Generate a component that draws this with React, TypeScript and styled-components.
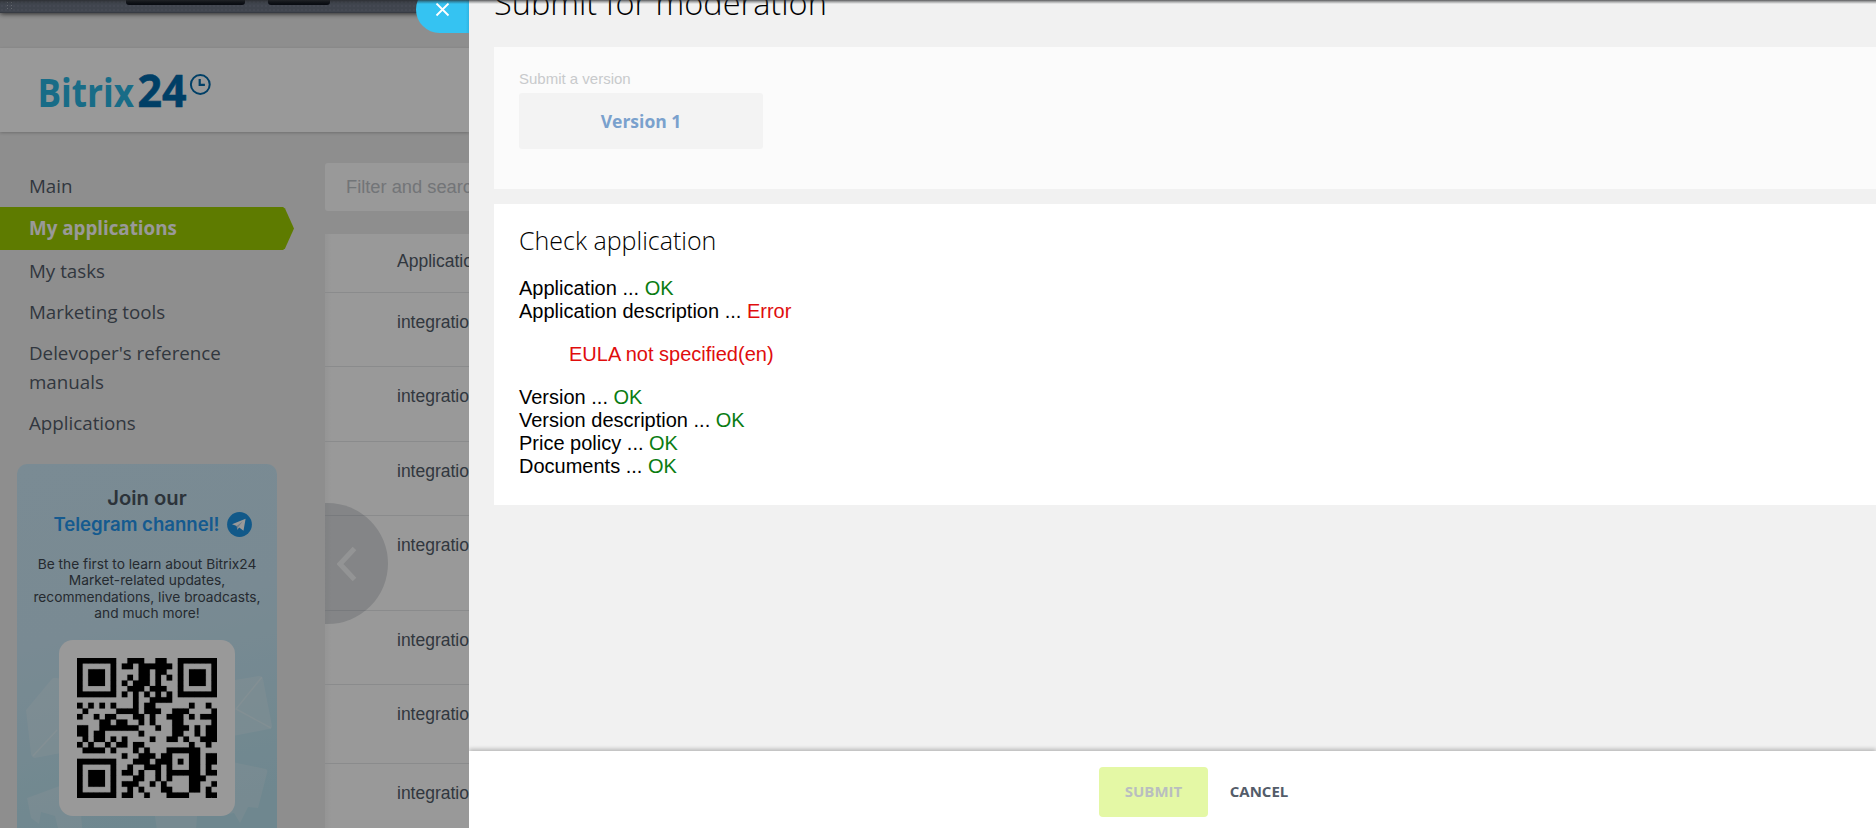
import React from 'react';
import styled, { createGlobalStyle } from 'styled-components';

const arial = "'Liberation Sans', Arial, sans-serif";
const openSans = "'Open Sans', sans-serif";
const inter = "Inter, sans-serif";

const GlobalStyle = createGlobalStyle`
  *, *::before, *::after { box-sizing: border-box; }
  body { margin: 0; overflow: hidden; font-family: ${arial}; }
  h1, h2, p { margin: 0; font-weight: normal; }
`;

const Screen = styled.div`
  position: relative;
  display: flex;
  width: 100%;
  height: 100vh;
  overflow: hidden;
`;

const TopShade = styled.div`
  position: absolute;
  z-index: 5;
  top: 0;
  left: 0;
  right: 0;
  height: 4px;
  background: linear-gradient(rgba(40, 42, 45, 0.75), rgba(40, 42, 45, 0.4) 40%, rgba(40, 42, 45, 0));
`;

/* Page under the slider */

const Underlay = styled.div`
  position: relative;
  display: flex;
  flex-direction: column;
  flex: 0 0 469px;
  overflow: hidden;
  background: #ededed;
  color: #535c69;

  &::after {
    content: '';
    position: absolute;
    inset: 0;
    background: rgba(0, 0, 0, 0.4);
  }
`;

const AdminBar = styled.div`
  display: flex;
  gap: 23px;
  flex: none;
  height: 13px;
  padding-left: 126px;
  background-color: #6b7382;
  background-image: radial-gradient(circle, #737b8a 0.8px, transparent 1px);
  background-size: 4px 4px;
  border-bottom: 1px solid #5c6370;
  box-shadow: 0 1px 5px rgba(0, 0, 0, 0.7);
`;

const AdminTab = styled.div<{ $width: number }>`
  width: ${(p) => p.$width}px;
  height: 4.5px;
  border-radius: 0 0 3px 3px;
  background: #10141f;
`;

const DragDots = styled.svg`
  position: absolute;
  top: 0;
  left: 6px;
`;

const SiteHeader = styled.header`
  flex: none;
  height: 84px;
  margin-top: 35px;
  padding: 22px 0 0 36px;
  background: #fff;
  box-shadow: 0 1px 3px rgba(0, 0, 0, 0.22);
`;

const Columns = styled.div`
  display: flex;
  flex: 1;
  min-height: 0;
`;

const Sidebar = styled.aside`
  flex: 0 0 325px;
  padding-top: 33px;
`;

const Nav = styled.nav`
  display: flex;
  flex-direction: column;
  font: 18.75px/29px ${openSans};
`;

const NavItem = styled.a`
  padding: 6px 60px 6px 29px;
`;

const ActiveItem = styled.a`
  width: 294px;
  margin-top: 1px;
  padding: 6px 0 8px 29px;
  background: #9dcd00;
  color: #fff;
  font-weight: 700;
  clip-path: polygon(0 0, 283px 0, 285px 1.5px, 294px 21.5px, 285px 41.5px, 283px 43px, 0 43px);
`;

const Banner = styled.section`
  position: relative;
  display: flex;
  flex-direction: column;
  align-items: center;
  width: 260px;
  height: 400px;
  margin: 21px 0 0 17px;
  padding-top: 21px;
  border-radius: 10px;
  background: linear-gradient(165deg, #cbe8f7 0%, #cae7f5 40%, #b9e2ef 85%);
  font-family: ${inter};
  text-align: center;
`;

const BannerArt = styled.svg`
  position: absolute;
  inset: 0;
`;

const BannerTitle = styled.h2`
  font-size: 20.2px;
  line-height: 26px;
  font-weight: 600;
  color: #4a5562;
`;

const BannerLink = styled.div`
  display: flex;
  align-items: center;
  gap: 7px;
  padding-left: 11px;
  font-size: 18.6px;
  line-height: 26px;
  font-weight: 600;
  color: #2496ee;
`;

const BannerText = styled.p`
  margin: 19px 0;
  font-size: 13.75px;
  line-height: 16.3px;
  color: #3e4650;
  white-space: nowrap;
`;

const QrCard = styled.div`
  position: relative;
  display: flex;
  flex: none;
  align-items: center;
  justify-content: center;
  width: 176px;
  height: 176px;
  border-radius: 14px;
  background: #fff;
`;

const Content = styled.main`
  position: relative;
  display: flex;
  flex-direction: column;
  flex: none;
  width: 1500px;
  padding-top: 31px;
`;

const Filter = styled.div`
  flex: none;
  height: 48px;
  padding-left: 21px;
  border-radius: 3px;
  background: #fff;
  font-size: 18.3px;
  line-height: 47px;
  color: #bfc3c8;
`;

const Table = styled.div`
  margin-top: 23px;
  background: linear-gradient(90deg, #f8f8f8, #fff 6px);
  font-size: 17.5px;
  line-height: 20px;
`;

const TableHead = styled.div`
  height: 58px;
  padding: 17px 0 0 72px;
`;

const TableRow = styled.div<{ $height: number }>`
  height: ${(p) => p.$height}px;
  padding: 19px 0 0 72px;
  border-top: 1px solid #e6e8ea;
`;

const ScrollLeft = styled.div`
  position: absolute;
  top: 371px;
  left: 0;
  display: flex;
  align-items: center;
  width: 63px;
  height: 121px;
  padding-left: 12px;
  border-radius: 0 61px 61px 0;
  background: rgba(82, 92, 105, 0.2);
`;

/* Slider */

const CloseTab = styled.button`
  position: absolute;
  z-index: 2;
  top: -14px;
  left: 416px;
  display: flex;
  align-items: center;
  width: 53px;
  height: 47px;
  padding: 0 0 0 19px;
  border: 0;
  border-radius: 24px 0 0 24px;
  background: linear-gradient(90deg, #35c3f2 94%, #2fb4e2);
`;

const Slider = styled.div`
  display: flex;
  flex-direction: column;
  flex: 1;
  min-width: 0;
  overflow: hidden;
  background: #f1f1f1;
`;

const SliderBody = styled.div`
  flex: 1;
  min-height: 0;
  margin-top: -17px;
  padding-left: 25px;
`;

const Title = styled.h1`
  margin-bottom: 24px;
  font: 300 32.5px/40px ${openSans};
  color: #000;
`;

const VersionCard = styled.section`
  height: 142px;
  margin-bottom: 15px;
  padding: 22px 25px;
  background: #fbfbfb;
`;

const VersionLabel = styled.div`
  margin-bottom: 4px;
  font-size: 15px;
  line-height: 20px;
  color: #c8cacc;
`;

const VersionOption = styled.div`
  width: 244px;
  height: 56px;
  border-radius: 3px;
  background: #f3f3f3;
  font: 700 17.5px/57px ${openSans};
  text-align: center;
  color: #7aa1cd;
`;

const CheckCard = styled.section`
  height: 301px;
  padding: 19px 25px;
  background: #fff;
  font-size: 20px;
  line-height: 23px;
  color: #000;
`;

const CheckTitle = styled.h2`
  margin-bottom: 20px;
  font: 300 25px/34px ${openSans};
`;

const Status = styled.span<{ $ok: boolean }>`
  color: ${(p) => (p.$ok ? '#0a7c12' : '#e00d0d')};
`;

const ErrorNote = styled.p`
  margin: 20px 0 20px 50px;
  color: #e00d0d;
`;

const Footer = styled.footer`
  position: relative;
  display: flex;
  flex: none;
  justify-content: center;
  height: 77px;
  padding-top: 16px;
  background: #fff;
  box-shadow: 0 -2px 4px rgba(0, 0, 0, 0.24);
`;

const FooterActions = styled.div`
  display: flex;
  width: 147px;
`;

const FooterButton = styled.button<{ $primary?: boolean }>`
  flex: none;
  width: ${(p) => (p.$primary ? 109 : 102)}px;
  height: 50px;
  padding: 0 0 2px;
  border: 0;
  border-radius: 4px;
  background: ${(p) => (p.$primary ? '#e4f8a5' : 'transparent')};
  color: ${(p) => (p.$primary ? '#b9bec0' : '#535c69')};
  font: 700 15px/48px ${openSans};
`;

const qrRows = [
  '#######..###..##..#######',
  '#.....#.##.######.#.....#',
  '#.###.#....##.##..#.###.#',
  '#.###.#..#.##.#.#.#.###.#',
  '#.###.#.#.###.#...#.###.#',
  '#.....#..###.###..#.....#',
  '#######.#.#.#.#.#.#######',
  '..........#..####........',
  '#.#.#.#...#.##......#..#.',
  '.#.....####.###..###....#',
  '#..#.##...##.#..###.#.###',
  '....##.##..#.#...##.....#',
  '##..#######...#..###.#.##',
  '##.##......#.....##..#.##',
  '.#.##.#.#....#..##.#..###',
  '#.#..#.##.##........#..#.',
  '.####.#...#.#...######...',
  '........#..###.##...##.##',
  '#######...###.###.#.##.##',
  '#.....#..#..###.#...##.#.',
  '#.###.#.##.#..#.######.##',
  '#.###.#...##..#.#...###..',
  '#.###.#.###..#.#....##..#',
  '#.....#..#.#...##...##.#.',
  '#######.##..#...####...##',
];

const qrPath = qrRows
  .map((row, y) => [...row].map((c, x) => (c === '#' ? `M${x} ${y}h1v1h-1z` : '')).join(''))
  .join('');

const rowHeights = [74, 75, 74, 95, 74, 79, 80];

const firstChecks = [
  { name: 'Application', ok: true },
  { name: 'Application description', ok: false },
];
const lastChecks = [
  { name: 'Version', ok: true },
  { name: 'Version description', ok: true },
  { name: 'Price policy', ok: true },
  { name: 'Documents', ok: true },
];

function CheckLine({ name, ok }: { name: string; ok: boolean }) {
  return (
    <div>
      {name} ... <Status $ok={ok}>{ok ? 'OK' : 'Error'}</Status>
    </div>
  );
}

function Logo() {
  return (
    <svg width="180" height="42" viewBox="0 0 180 42">
      <g fontFamily="'Open Sans', sans-serif" fontWeight="700">
        <text x="1.500" y="36.500" fontSize="39" textLength="96.500" lengthAdjust="spacingAndGlyphs" fill="#28b4e2">
          Bitrix
        </text>
        <text x="101.500" y="36.500" fontSize="45" textLength="49" lengthAdjust="spacingAndGlyphs" fill="#006aab" stroke="#006aab" strokeWidth="0.600">
          24
        </text>
      </g>
      <circle cx="164.300" cy="14.500" r="9.400" fill="none" stroke="#006aab" strokeWidth="2" />
      <path d="M163.700 9v5.800h5.200" fill="none" stroke="#006aab" strokeWidth="2.200" />
    </svg>
  );
}

function TelegramBanner() {
  return (
    <Banner>
      <BannerArt width="260" height="400" viewBox="0 0 260 400">
        <g fill="#fff" fillOpacity="0.2">
          <path d="M9 246 L34 216 Q36 213 40 214 L76 220 V283 L18 294 Q15 294 14 290Z" />
          <path d="M206 218 L242 212 Q245 212 246 215 L255 262 Q255 265 252 265 L206 274Z" />
          <path d="M206 296 L249 305 Q251 306 250 309 L241 344 L231 343 L223 359 L217 349 L206 351Z" />
          <path d="M10 334 L48 320 L62 350 H64 L68 400 H50 L38 352 L24 348 L22 360 L14 354Z" />
          <path d="M138 352 H180 L178 380 H142Z" />
        </g>
        <path d="M16 292 L40 266 M245 213 L219 245 L254 264" fill="none" stroke="#fff" strokeOpacity="0.25" strokeWidth="1.5" />
      </BannerArt>
      <BannerTitle>Join our</BannerTitle>
      <BannerLink>
        Telegram channel!
        <svg width="25" height="25" viewBox="0 0 25 25">
          <circle cx="12.500" cy="12.500" r="12.400" fill="#1f94e4" />
          <path d="M5 12.200 L18.600 6.800 L16.500 18.800 L12.200 15.600 L10.300 17.700 L9.700 14Z" fill="#fff" />
          <path d="M9.700 14 L15.800 9.300 L11.300 14.900 L10.300 17.700Z" fill="#b5cfe4" />
        </svg>
      </BannerLink>
      <BannerText>
        Be the first to learn about Bitrix24
        <br />
        Market-related updates,
        <br />
        recommendations, live broadcasts,
        <br />
        and much more!
      </BannerText>
      <QrCard>
        <svg width="140" height="140" viewBox="0 0 25 25">
          <path d={qrPath} fill="#000" stroke="#000" strokeWidth="0.030" />
        </svg>
      </QrCard>
    </Banner>
  );
}

export default function App() {
  return (
    <Screen>
      <GlobalStyle />
      <TopShade />
      <Underlay>
        <AdminBar>
          <DragDots width="8" height="10" viewBox="0 0 8 10" fill="#a9afba">
            <path d="M1 2h1v1h-1zM5 2h1v1h-1zM1 5h1v1h-1zM5 5h1v1h-1zM1 8h1v1h-1zM5 8h1v1h-1z" />
          </DragDots>
          <AdminTab $width={119} />
          <AdminTab $width={62} />
        </AdminBar>
        <SiteHeader>
          <Logo />
        </SiteHeader>
        <Columns>
          <Sidebar>
            <Nav>
              <NavItem>Main</NavItem>
              <ActiveItem>My applications</ActiveItem>
              <NavItem>My tasks</NavItem>
              <NavItem>Marketing tools</NavItem>
              <NavItem>Delevoper's reference manuals</NavItem>
              <NavItem>Applications</NavItem>
            </Nav>
            <TelegramBanner />
          </Sidebar>
          <Content>
            <Filter>Filter and search</Filter>
            <Table>
              <TableHead>Application</TableHead>
              {rowHeights.map((height, i) => (
                <TableRow key={i} $height={height}>
                  integration
                </TableRow>
              ))}
            </Table>
            <ScrollLeft>
              <svg width="20" height="36" viewBox="0 0 20 36">
                <path d="M17.500 2.500 L3 18 L17.500 33.500" fill="none" stroke="#fff" strokeOpacity="0.75" strokeWidth="5" />
              </svg>
            </ScrollLeft>
          </Content>
        </Columns>
      </Underlay>
      <CloseTab aria-label="Close">
        <svg width="15" height="15" viewBox="0 0 15 15">
          <path d="M1.500 1.500 L13.500 13.500 M13.500 1.500 L1.500 13.500" stroke="#fff" strokeWidth="1.800" />
        </svg>
      </CloseTab>
      <Slider>
        <SliderBody>
          <Title>Submit for moderation</Title>
          <VersionCard>
            <VersionLabel>Submit a version</VersionLabel>
            <VersionOption>Version 1</VersionOption>
          </VersionCard>
          <CheckCard>
            <CheckTitle>Check application</CheckTitle>
            {firstChecks.map((check) => (
              <CheckLine key={check.name} {...check} />
            ))}
            <ErrorNote>EULA not specified(en)</ErrorNote>
            {lastChecks.map((check) => (
              <CheckLine key={check.name} {...check} />
            ))}
          </CheckCard>
        </SliderBody>
        <Footer>
          <FooterActions>
            <FooterButton $primary>SUBMIT</FooterButton>
            <FooterButton>CANCEL</FooterButton>
          </FooterActions>
        </Footer>
      </Slider>
    </Screen>
  );
}
